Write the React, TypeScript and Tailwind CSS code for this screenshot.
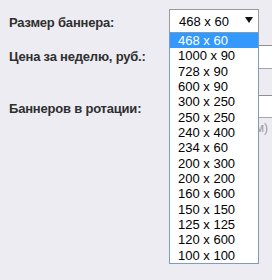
import React from 'react'

const sizes = [
  '468 x 60',
  '1000 x 90',
  '728 x 90',
  '600 x 90',
  '300 x 250',
  '250 x 250',
  '240 x 400',
  '234 x 60',
  '200 x 300',
  '200 x 200',
  '160 x 600',
  '150 x 150',
  '125 x 125',
  '120 x 600',
  '100 x 100',
]

export default function App() {
  return (
    <div className="relative w-[272px] h-[280px] overflow-hidden bg-[#ececf2] font-['Liberation_Sans',Arial,sans-serif] text-[13px]">
      <div className="grid grid-cols-[169px_1fr] pt-[9px]">
        {/* banner size */}
        <div className="pl-[9px] pt-[6px] leading-[15px] font-bold tracking-[-0.2px] text-[#2f2f2f]">Размер баннера:</div>
        <div className="flex items-center justify-between w-[90px] h-[24px] border border-[#9a9a9a] bg-white pl-[9px] pr-[5px] leading-[15px] text-black">
          <span>468 x 60</span>
          <svg width="8" height="6" viewBox="0 0 8 6" className="mt-[-2px]">
            <polygon points="0,0 8,0 4,6" fill="#111" />
          </svg>
        </div>

        {/* price */}
        <div className="pl-[9px] pt-[16px] leading-[15px] font-bold tracking-[-0.2px] text-[#2f2f2f] whitespace-nowrap">Цена за неделю, руб.:</div>
        <div className="mt-[12px] h-[24px] border border-[#a5a5a5] border-t-[#8f8f8f] bg-white w-[140px]" />

        {/* rotation */}
        <div className="pl-[9px] pt-[32px] leading-[15px] font-bold tracking-[-0.2px] text-[#2f2f2f]">Баннеров в ротации:</div>
        <div className="mt-[26px] flex flex-col">
          <div className="h-[23px] border border-[#a5a5a5] border-t-[#8f8f8f] bg-white w-[140px]" />
          <div className="mt-[3px] w-[99px] flex justify-end whitespace-nowrap text-[12px] leading-[14px] text-[#9a9a9a]">(по 1 м)</div>
        </div>
      </div>

      {/* open dropdown list */}
      <ul className="absolute left-[169px] top-[32px] w-[90px] border border-[#7f9db9] bg-white text-black">
        {sizes.map((s, i) => (
          <li
            key={s}
            className={
              i === 0
                ? 'h-[15.33px] leading-[15px] pl-[8px] bg-[#3399ff] text-white'
                : 'h-[15.33px] leading-[15px] pl-[8px]'
            }
          >
            {s}
          </li>
        ))}
      </ul>
    </div>
  )
}
